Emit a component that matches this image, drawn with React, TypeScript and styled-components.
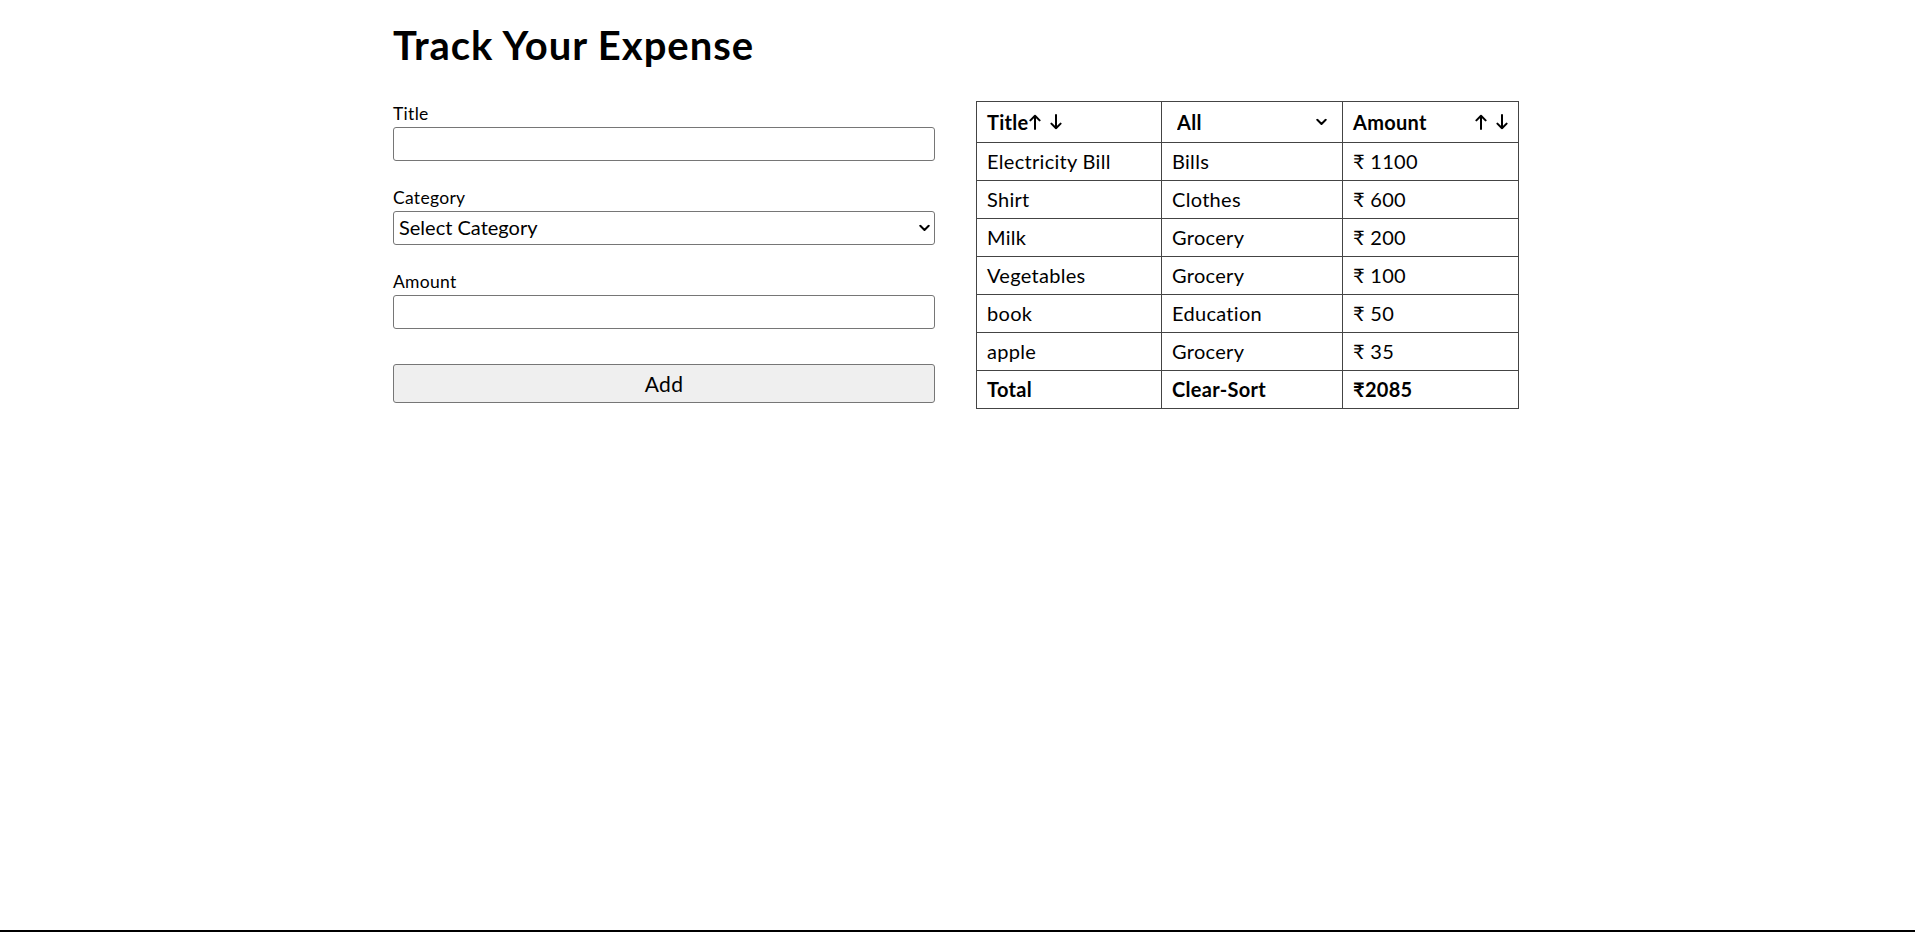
import React from "react";
import styled, { createGlobalStyle } from "styled-components";

const Global = createGlobalStyle`
  html, body { margin: 0; padding: 0; background: #fff; }
  body { font-family: "Lato", "Noto Sans", sans-serif; color: #000; letter-spacing: 0.3px; }
  * { box-sizing: border-box; }
`;

const Page = styled.div`
  min-height: 100vh;
  border-bottom: 2px solid #000;
  padding-top: 18px;
`;

const Container = styled.div`
  width: 1129px;
  margin: 0 auto;
`;

const Heading = styled.h1`
  margin: 0 0 29px;
  font-size: 40px;
  line-height: 54px;
  font-weight: 700;
  letter-spacing: 0.95px;
`;

const Columns = styled.div`
  display: grid;
  grid-template-columns: 542px 542px;
  column-gap: 41px;
  align-items: start;
`;

const Form = styled.form`
  display: flex;
  flex-direction: column;
`;

const Group = styled.div`
  display: flex;
  flex-direction: column;
  margin-bottom: 24px;
`;

const Label = styled.label`
  font-size: 17.5px;
  line-height: 24px;
  margin-top: 1px;
  margin-bottom: 1px;
`;

const TextInput = styled.input`
  width: 100%;
  height: 34px;
  font: inherit;
  font-size: 20px;
  border: 1px solid #767676;
  border-radius: 3px;
  padding: 1px 4px;
  background: #fff;
`;

const SelectWrap = styled.div`
  position: relative;
  width: 100%;
`;

const Chevron = styled.svg`
  position: absolute;
  right: 5px;
  top: 50%;
  transform: translateY(-50%);
  pointer-events: none;
`;

const Select = styled.select`
  appearance: none;
  display: block;
  width: 100%;
  height: 34px;
  font: inherit;
  font-size: 20px;
  color: #000;
  border: 1px solid #767676;
  border-radius: 3px;
  background: #fff;
  padding: 0 24px 3px 5px;
`;

const AddButton = styled.button`
  margin-top: 11px;
  width: 100%;
  height: 39px;
  font: inherit;
  font-size: 21px;
  letter-spacing: 0.4px;
  color: #000;
  background: #efefef;
  border: 1px solid #767676;
  border-radius: 3px;
`;

const Table = styled.table`
  width: 542px;
  border-collapse: collapse;
  table-layout: fixed;
  font-size: 20px;
`;

const Th = styled.th`
  border: 1px solid #444;
  padding: 5px 10px;
  height: 41px;
  text-align: left;
  font-weight: 700;
  line-height: 30px;
  vertical-align: middle;
`;

const Td = styled.td<{ $bold?: boolean }>`
  border: 1px solid #444;
  padding: 5px 10px;
  line-height: 27px;
  font-weight: ${(p) => (p.$bold ? 700 : 400)};
  white-space: nowrap;
`;

const HeadInline = styled.div`
  display: flex;
  align-items: center;
`;

const HeadSpread = styled.div`
  display: flex;
  align-items: center;
  justify-content: space-between;
`;

const ArrowGroup = styled.span<{ $gap: number }>`
  display: inline-flex;
  align-items: center;
  gap: ${(p) => p.$gap}px;
`;

const ArrowButton = styled.button`
  display: inline-flex;
  padding: 0;
  margin: 0;
  border: none;
  background: none;
  color: #000;
  cursor: pointer;
`;

const HeadSelect = styled.select`
  appearance: none;
  display: block;
  width: 100%;
  height: 30px;
  font: inherit;
  font-size: 20px;
  font-weight: 700;
  letter-spacing: 0.3px;
  color: #000;
  border: none;
  background: transparent;
  outline: none;
  padding: 0 22px 0 5px;
`;

const Arrow: React.FC<{ dir: "up" | "down" }> = ({ dir }) => (
  <svg width="12" height="16" viewBox="0 0 12 16" fill="none" stroke="#000" strokeWidth="2" strokeLinecap="round" strokeLinejoin="round">
    {dir === "up" ? (
      <path d="M6 15V1.8M1.4 6.4L6 1.8L10.6 6.4" />
    ) : (
      <path d="M6 1V14.2M1.4 9.6L6 14.2L10.6 9.6" />
    )}
  </svg>
);

const ChevronIcon: React.FC = () => (
  <Chevron width="11" height="7" viewBox="0 0 11 7" fill="none" stroke="#000" strokeWidth="2" strokeLinecap="round" strokeLinejoin="round">
    <path d="M1.3 1.3L5.5 5.5L9.7 1.3" />
  </Chevron>
);

const categories = ["Grocery", "Clothes", "Bills", "Education", "Medicine"];

const rows = [
  ["Electricity Bill", "Bills", "₹ 1100"],
  ["Shirt", "Clothes", "₹ 600"],
  ["Milk", "Grocery", "₹ 200"],
  ["Vegetables", "Grocery", "₹ 100"],
  ["book", "Education", "₹ 50"],
  ["apple", "Grocery", "₹ 35"],
];

export default function App() {
  return (
    <>
      <Global />
      <Page>
        <Container>
          <Heading>Track Your Expense</Heading>
          <Columns>
            <Form onSubmit={(e) => e.preventDefault()}>
              <Group>
                <Label htmlFor="title">Title</Label>
                <TextInput id="title" type="text" />
              </Group>
              <Group>
                <Label htmlFor="category">Category</Label>
                <SelectWrap>
                  <Select id="category" defaultValue="">
                    <option value="" hidden>Select Category</option>
                    {categories.map((c) => (
                      <option key={c} value={c}>{c}</option>
                    ))}
                  </Select>
                  <ChevronIcon />
                </SelectWrap>
              </Group>
              <Group>
                <Label htmlFor="amount">Amount</Label>
                <TextInput id="amount" type="number" />
              </Group>
              <AddButton type="submit">Add</AddButton>
            </Form>
            <Table>
              <colgroup>
                <col style={{ width: 185 }} />
                <col style={{ width: 181 }} />
                <col style={{ width: 176 }} />
              </colgroup>
              <thead>
                <tr>
                  <Th>
                    <HeadInline>
                      Title
                      <ArrowGroup $gap={9}>
                        <ArrowButton type="button"><Arrow dir="up" /></ArrowButton>
                        <ArrowButton type="button"><Arrow dir="down" /></ArrowButton>
                      </ArrowGroup>
                    </HeadInline>
                  </Th>
                  <Th>
                    <SelectWrap>
                      <HeadSelect defaultValue="All">
                        <option value="All">All</option>
                        {categories.map((c) => (
                          <option key={c} value={c}>{c}</option>
                        ))}
                      </HeadSelect>
                      <ChevronIcon />
                    </SelectWrap>
                  </Th>
                  <Th>
                    <HeadSpread>
                      Amount
                      <ArrowGroup $gap={9}>
                        <ArrowButton type="button"><Arrow dir="up" /></ArrowButton>
                        <ArrowButton type="button"><Arrow dir="down" /></ArrowButton>
                      </ArrowGroup>
                    </HeadSpread>
                  </Th>
                </tr>
              </thead>
              <tbody>
                {rows.map((r) => (
                  <tr key={r[0]}>
                    <Td>{r[0]}</Td>
                    <Td>{r[1]}</Td>
                    <Td>{r[2]}</Td>
                  </tr>
                ))}
                <tr>
                  <Td $bold>Total</Td>
                  <Td $bold>Clear-Sort</Td>
                  <Td $bold>₹2085</Td>
                </tr>
              </tbody>
            </Table>
          </Columns>
        </Container>
      </Page>
    </>
  );
}
